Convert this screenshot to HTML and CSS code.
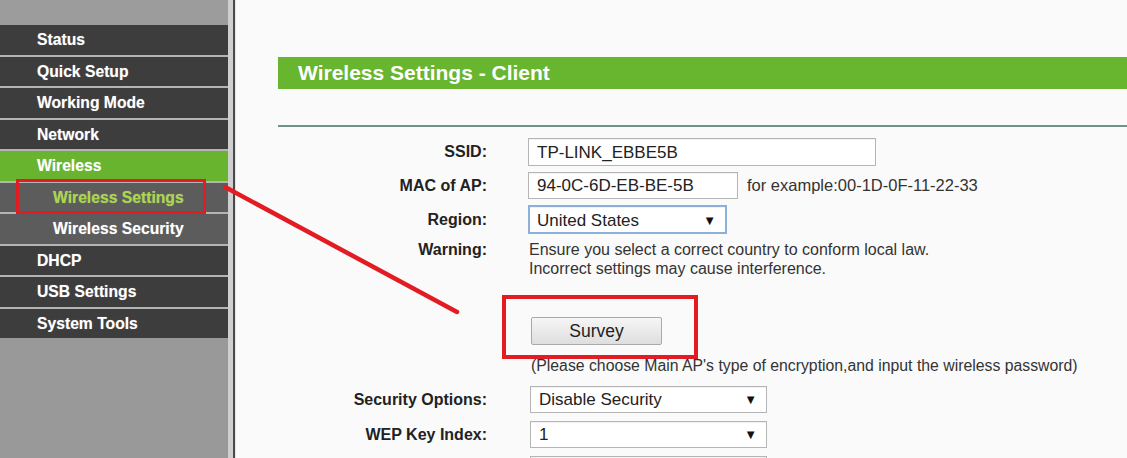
FILE: index.html
```html
<!DOCTYPE html>
<html>
<head>
<meta charset="utf-8">
<link rel="stylesheet" href="styles.css">
</head>
<body>
<div class="page">
  <aside class="sidebar">
    <div class="side-top"></div>
    <nav class="nav">
      <div class="item">Status</div>
      <div class="item">Quick Setup</div>
      <div class="item">Working Mode</div>
      <div class="item">Network</div>
      <div class="item active">Wireless</div>
      <div class="item sub current">Wireless Settings</div>
      <div class="item sub">Wireless Security</div>
      <div class="item">DHCP</div>
      <div class="item">USB Settings</div>
      <div class="item">System Tools</div>
    </nav>
    <div class="side-fill"></div>
  </aside>
  <div class="divider"><span class="d-light"></span><span class="d-dark"></span><span class="d-edge"></span></div>
  <main class="main">
    <div class="title">Wireless Settings - Client</div>
    <div class="rule"></div>
    <div class="form">
      <div class="row r-ssid">
        <div class="label">SSID:</div>
        <div class="field"><div class="box w-ssid">TP-LINK_EBBE5B</div></div>
      </div>
      <div class="row r-mac">
        <div class="label">MAC of AP:</div>
        <div class="field"><div class="box w-mac">94-0C-6D-EB-BE-5B</div><span class="hint">for example:00-1D-0F-11-22-33</span></div>
      </div>
      <div class="row r-region">
        <div class="label">Region:</div>
        <div class="field"><div class="box select focus w-region"><span>United States</span><span class="arrow">▼</span></div></div>
      </div>
      <div class="row r-warn">
        <div class="label">Warning:</div>
        <div class="field text">Ensure you select a correct country to conform local law.<br>Incorrect settings may cause interference.</div>
      </div>
      <div class="row r-survey">
        <div class="label"></div>
        <div class="field"><button class="btn">Survey</button></div>
      </div>
      <div class="row r-note">
        <div class="label"></div>
        <div class="field text note">(Please choose Main AP's type of encryption,and input the wireless password)</div>
      </div>
      <div class="row r-sec">
        <div class="label">Security Options:</div>
        <div class="field"><div class="box select w-sel"><span>Disable Security</span><span class="arrow">▼</span></div></div>
      </div>
      <div class="row r-wep">
        <div class="label">WEP Key Index:</div>
        <div class="field"><div class="box select w-sel"><span>1</span><span class="arrow">▼</span></div></div>
      </div>
      <div class="row r-next">
        <div class="label"></div>
        <div class="field"><div class="box select w-sel"><span></span><span class="arrow"></span></div></div>
      </div>
    </div>
  </main>

  <div class="mark mark-nav"></div>
  <div class="mark mark-survey"></div>
  <svg class="arrow-line" width="1127" height="458" viewBox="0 0 1127 458">
    <line x1="225" y1="187" x2="457" y2="312" stroke="#e31b23" stroke-width="4.5" stroke-linecap="round"/>
  </svg>
</div>
</body>
</html>
```

FILE: styles.css
```css
* { box-sizing: border-box; }
html, body { margin: 0; padding: 0; }
body {
  font-family: "Liberation Sans", Arial, sans-serif;
  background: #fafafa;
  color: #2a2a2a;
}
.page {
  position: relative;
  display: flex;
  width: 1127px;
  height: 458px;
  overflow: hidden;
}
.sidebar {
  width: 228px;
  flex: none;
  display: flex;
  flex-direction: column;
  background: #9a9a9a;
}
.side-top { height: 25px; background: #9c9c9c; }
.nav { background: #b4b4b4; }
.item {
  height: 29.5px;
  margin-bottom: 2px;
  background: #3d3d3d;
  color: #fff;
  font-weight: bold;
  font-size: 15.7px;
  line-height: 29.5px;
  padding-left: 37px;
  text-shadow: 0 0 1px rgba(255,255,255,0.4);
}
.item:last-child { margin-bottom: 0; }
.item.active { background: #68b42f; }
.item.sub { background: #5c5c5c; padding-left: 53px; }
.item.current { color: #a9d845; }
.side-fill { flex: 1; background: #999; }

.divider { width: 8px; flex: none; display: flex; }
.d-light { width: 5px; background: #cfcfcf; }
.d-dark { width: 2px; background: #4a4a4a; }
.d-edge { width: 1px; background: #e4e4e4; }

.main {
  flex: 1;
  padding-left: 42px;
  background: #fafafa;
}
.title {
  margin-top: 57px;
  height: 32px;
  line-height: 32px;
  background: #68b52f;
  color: #fff;
  font-weight: bold;
  font-size: 21px;
  padding-left: 20px;
}
.rule {
  margin-top: 36px;
  height: 2px;
  background: #6f9486;
}
.form { display: flex; flex-direction: column; }
.row { display: flex; align-items: center; }
.label {
  width: 209px;
  flex: none;
  text-align: right;
  font-weight: bold;
  font-size: 16px;
  color: #222;
}
.field {
  margin-left: 42px;
  display: flex;
  align-items: center;
  font-size: 16px;
  color: #333;
}
.box {
  margin-left: -1px;
  height: 28px;
  border: 1px solid #b5b5b5;
  background: #fff;
  font-size: 17px;
  line-height: 27px;
  padding-left: 8px;
  color: #222;
  box-shadow: inset 0 1px 1px rgba(0,0,0,0.06);
}
.select {
  display: flex;
  justify-content: space-between;
  padding-right: 9px;
}
.arrow { font-size: 13px; color: #111; }
.focus { border: 2px solid #8db0da; line-height: 27px; padding-left: 7px; }
.w-ssid { width: 348px; }
.w-mac { width: 210px; }
.w-region { width: 199px; height: 29px; }
.w-sel { width: 237px; height: 27px; line-height: 26px; margin-left: 1px; }
.hint { margin-left: 9px; font-size: 16.5px; color: #333; }
.text { line-height: 19px; }
.note { font-size: 15.8px; }

.r-ssid { margin-top: 11px; }
.r-mac { margin-top: 6px; }
.r-mac .box { height: 27px; line-height: 26px; }
.r-region { margin-top: 6px; }
.r-warn { margin-top: 6px; align-items: flex-start; }
.r-warn .label { line-height: 19px; }
.r-survey { margin-top: 39px; }
.btn {
  margin-left: 2px;
  width: 131px;
  height: 28px;
  border: 1px solid #a9a9a9;
  border-radius: 2px;
  background: linear-gradient(#f6f6f6, #dedede);
  font-family: "Liberation Sans", Arial, sans-serif;
  font-size: 17.5px;
  color: #222;
  padding: 0;
}
.r-note { margin-top: 11px; }
.r-note .field { margin-left: 44px; }
.r-sec { margin-top: 11px; }
.r-wep { margin-top: 8px; }
.r-next { margin-top: 8px; }

.mark {
  position: absolute;
  border: 3.5px solid #e31b23;
}
.mark-nav { left: 16px; top: 179px; width: 190px; height: 35px; }
.mark-survey { left: 502px; top: 295px; width: 196px; height: 64px; border-width: 4.5px; }
.arrow-line { position: absolute; left: 0; top: 0; pointer-events: none; }
```
